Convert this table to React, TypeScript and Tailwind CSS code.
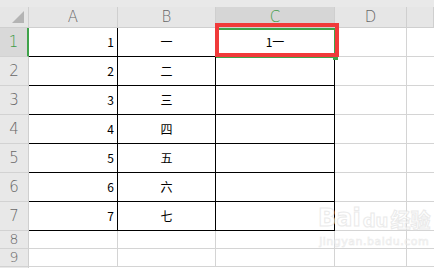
import { Fragment } from "react";

const cols = ["A", "B", "C", "D", ""];
const nums = ["一", "二", "三", "四", "五", "六", "七"];

function HeaderCell({ label, active }: { label: string; active?: boolean }) {
  return (
    <div
      className={`flex items-center justify-center border-r border-b border-[#cfcfcf] text-[15px] font-['DejaVu_Sans',sans-serif] font-light ${
        active ? "bg-[#d6d6d6] text-[#3e9c47]" : "bg-[#e6e6e6] text-[#666666]"
      }`}
    >
      {label}
    </div>
  );
}

function RowHead({ n, active, short }: { n: number; active?: boolean; short?: boolean }) {
  return (
    <div
      className={`flex items-center justify-center border-b border-[#d2d2d2] font-['DejaVu_Sans',sans-serif] font-light ${
        short ? "text-[14px]" : "text-[15px]"
      } ${
        active
          ? "bg-[#d9d9d9] text-[#3e9c47] border-r-2 border-r-[#3fa34a]"
          : "bg-[#e8e8e8] text-[#666666] border-r border-r-[#cfcfcf]"
      }`}
    >
      {n}
    </div>
  );
}

export default function App() {
  return (
    <div className="relative w-[434px] h-[268px] overflow-hidden bg-white font-['Noto_Sans_CJK_SC',sans-serif] text-[12px] text-black">
      <div className="grid grid-cols-[29px_89px_98px_119px_72px_27px] grid-rows-[7px_21px_repeat(7,29px)_18px_18px_1fr] h-full">
        {/* top strip */}
        <div className="col-span-6 bg-[#e9e9e9]" />

        {/* header row */}
        <div className="flex items-end justify-end pr-[4px] pb-[4px] bg-[#e6e6e6] border-r border-b border-[#cfcfcf]">
          <svg width="12" height="12" viewBox="0 0 12 12">
            <polygon points="12,0 12,12 0,12" fill="#b4b4b4" />
          </svg>
        </div>
        {cols.map((c) => (
          <HeaderCell key={c || "e"} label={c} active={c === "C"} />
        ))}

        {/* table rows */}
        {nums.map((ch, i) => (
          <Fragment key={i}>
            <RowHead n={i + 1} active={i === 0} />
            <div className="flex items-center justify-end pr-[3px] border-r border-b border-black">{i + 1}</div>
            <div className="flex items-center justify-center border-r border-b border-black">{ch}</div>
            <div className="flex items-center justify-center border-r border-b border-black">{i === 0 ? "1一" : ""}</div>
            <div className="border-r border-b border-[#d4d4d4]" />
            <div className="border-b border-[#d4d4d4]" />
          </Fragment>
        ))}

        {[8, 9].map((n) => (
          <Fragment key={n}>
            <RowHead n={n} short />
            <div className="border-r border-b border-[#d4d4d4]" />
            <div className="border-r border-b border-[#d4d4d4]" />
            <div className="border-r border-b border-[#d4d4d4]" />
            <div className="border-r border-b border-[#d4d4d4]" />
            <div className="border-b border-[#d4d4d4]" />
          </Fragment>
        ))}
        <div className="bg-[#e8e8e8] border-r border-[#cfcfcf]" />
      </div>

      {/* selection of C1 */}
      <div className="absolute left-[216px] top-[28px] w-[120px] h-[30px] border-2 border-[#3fa34a]" />
      <div className="absolute left-[333px] top-[56px] w-[5px] h-[4px] bg-[#3fa34a]" />
      {/* red annotation box */}
      <div className="absolute left-[215px] top-[23px] w-[124px] h-[34px] border-4 border-[#f03a3a]" />

      {/* watermark */}
      <div className="absolute left-[318px] top-[206px] flex flex-col items-center text-white font-['DejaVu_Sans',sans-serif] [-webkit-text-stroke:1px_#e2e2e2] opacity-70">
        <div className="flex items-end gap-[2px] text-[24px] font-bold leading-none">
          <span>Bai</span>
          <span className="text-[18px]">du</span>
          <span className="font-['Noto_Sans_CJK_SC',sans-serif] text-[20px]">经验</span>
        </div>
        <div className="text-[11px] leading-none mt-[6px] tracking-[0.5px] [-webkit-text-stroke:0.6px_#e2e2e2]">
          jingyan.baidu.com
        </div>
      </div>
    </div>
  );
}
